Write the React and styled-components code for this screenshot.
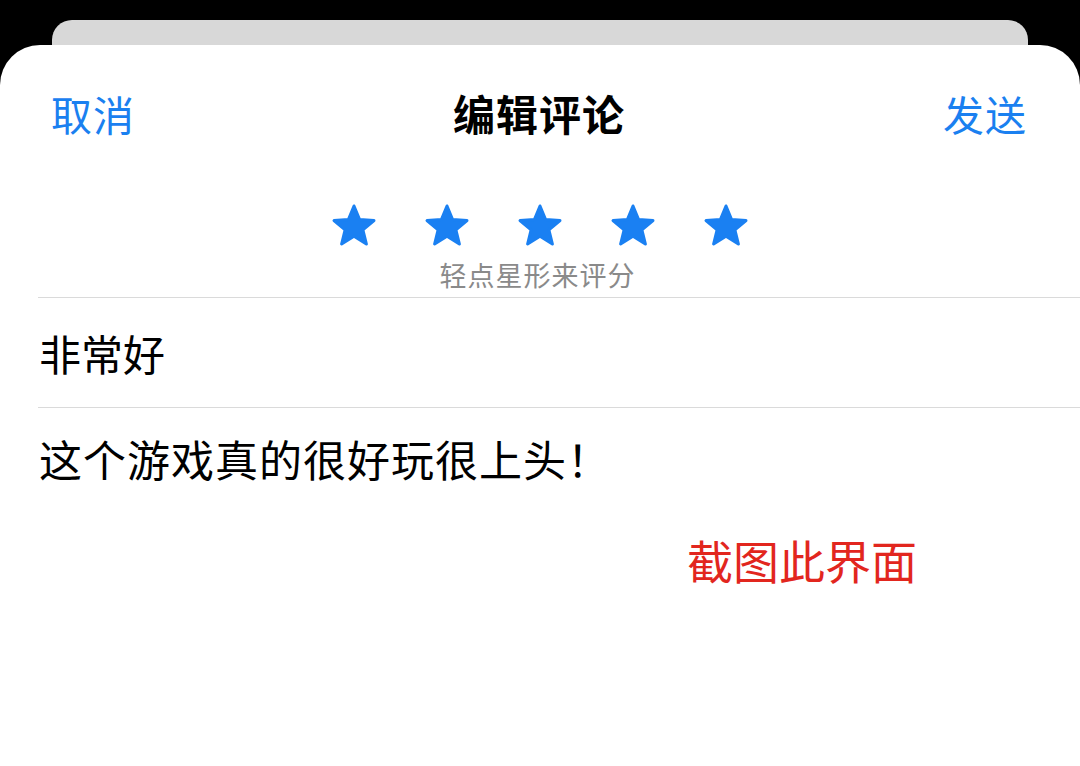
import React from 'react';
import styled, { createGlobalStyle } from 'styled-components';

const GlobalStyle = createGlobalStyle`
  html, body {
    margin: 0;
    padding: 0;
    background: #000;
  }
  body {
    font-family: 'Noto Sans CJK SC', 'Noto Sans', sans-serif;
  }
`;

const Screen = styled.div`
  width: 1080px;
  height: 766px;
  overflow: hidden;
  background: #000;
  padding-top: 20px;
  box-sizing: border-box;
  display: flex;
  flex-direction: column;
`;

const BackCard = styled.div`
  height: 25px;
  margin: 0 52px;
  background: #d8d8d8;
  border-radius: 20px 20px 0 0;
  flex-shrink: 0;
`;

const Sheet = styled.div`
  flex: 1;
  background: #fff;
  border-radius: 40px 40px 0 0;
  display: flex;
  flex-direction: column;
`;

const Header = styled.div`
  height: 142px;
  box-sizing: border-box;
  padding: 0 53px 6px 51px;
  display: grid;
  grid-template-columns: 1fr auto 1fr;
  align-items: center;
`;

const NavButton = styled.span`
  font-size: 41px;
  letter-spacing: 1px;
  color: #1a80f0;
  justify-self: ${p => (p.$end ? 'end' : 'start')};
  line-height: 1;
`;

const Title = styled.span`
  font-size: 42px;
  letter-spacing: 1px;
  font-weight: 700;
  color: #000;
  line-height: 1;
`;

const Rating = styled.div`
  display: flex;
  flex-direction: column;
  align-items: center;
  padding-top: 15px;
`;

const Stars = styled.div`
  display: flex;
  gap: 45px;
`;

const StarIcon = styled.svg`
  width: 48px;
  height: 48px;
  display: block;
`;

const Caption = styled.div`
  margin-top: 10px;
  font-size: 27px;
  letter-spacing: 1px;
  line-height: 30px;
  color: #8a8a8a;
  padding-right: 5px;
`;

const Field = styled.div`
  margin-left: 38px;
  border-top: 1px solid #dadada;
  padding-left: 1px;
  color: #000;
  display: flex;
  align-items: center;
`;

const TitleField = styled(Field)`
  margin-top: 7px;
  height: 109px;
  font-size: 42px;
`;

const BodyField = styled(Field)`
  height: 104px;
  align-items: flex-start;
  padding-top: 24px;
  box-sizing: border-box;
  font-size: 43px;
  letter-spacing: 1px;
  line-height: 52px;
`;

const Note = styled.div`
  padding-left: 687px;
  padding-top: 18px;
  font-size: 46px;
  color: #e2261e;
  line-height: 60px;
`;

const Star = () => (
  <StarIcon viewBox="0 0 48 48">
    <path
      d="M24 4 L29.6 17.6 L44 18.6 L32.9 27.9 L36.4 42 L24 34.3 L11.6 42 L15.1 27.9 L4 18.6 L18.4 17.6 Z"
      fill="#1a80f2"
      stroke="#1a80f2"
      strokeWidth="3"
      strokeLinejoin="round"
    />
  </StarIcon>
);

export default function App() {
  return (
    <Screen>
      <GlobalStyle />
      <BackCard />
      <Sheet>
        <Header>
          <NavButton>取消</NavButton>
          <Title>编辑评论</Title>
          <NavButton $end>发送</NavButton>
        </Header>
        <Rating>
          <Stars>
            {[0, 1, 2, 3, 4].map(i => (
              <Star key={i} />
            ))}
          </Stars>
          <Caption>轻点星形来评分</Caption>
        </Rating>
        <TitleField>非常好</TitleField>
        <BodyField>这个游戏真的很好玩很上头！</BodyField>
        <Note>截图此界面</Note>
      </Sheet>
    </Screen>
  );
}
